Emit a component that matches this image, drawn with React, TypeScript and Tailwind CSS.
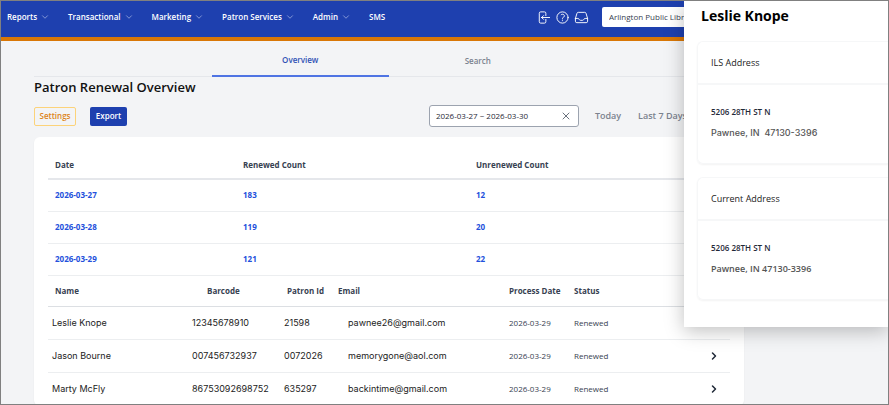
import React from "react"
import {
  HiOutlineArrowLeftOnRectangle,
  HiOutlineQuestionMarkCircle,
  HiOutlineInbox,
  HiOutlineChevronDown,
  HiOutlineXMark,
} from "react-icons/hi2"
import { ChevronRight } from "lucide-react"

const menu = [
  { label: "Reports", dropdown: true },
  { label: "Transactional", dropdown: true },
  { label: "Marketing", dropdown: true },
  { label: "Patron Services", dropdown: true },
  { label: "Admin", dropdown: true },
  { label: "SMS", dropdown: false },
]

const days = [
  { date: "2026-03-27", renewed: 183, unrenewed: 12 },
  { date: "2026-03-28", renewed: 119, unrenewed: 20 },
  { date: "2026-03-29", renewed: 121, unrenewed: 22 },
]

const patrons = [
  { name: "Leslie Knope", barcode: "12345678910", id: "21598", email: "pawnee26@gmail.com" },
  { name: "Jason Bourne", barcode: "007456732937", id: "0072026", email: "memorygone@aol.com" },
  { name: "Marty McFly", barcode: "86753092698752", id: "635297", email: "backintime@gmail.com" },
]

const NavBar: React.FC = () => {
  return (
    <header className="flex h-10 items-center border-b-4 border-[#d97706] bg-[#1e40af] pb-1 pl-[6px] text-white">
      <nav className="flex items-center gap-[19px]">
        {menu.map((item) => (
          <button key={item.label} type="button" className="flex items-center gap-1 text-[8px] leading-3 font-semibold">
            {item.label}
            {item.dropdown && <HiOutlineChevronDown className="size-2 text-[#b4c0e8]" strokeWidth={2} />}
          </button>
        ))}
      </nav>

      {/* Account shortcuts */}
      <div className="ml-auto flex items-center gap-1 pr-[13px]">
        <button type="button" aria-label="Sign out">
          <HiOutlineArrowLeftOnRectangle className="size-[15px]" />
        </button>
        <button type="button" aria-label="Help">
          <HiOutlineQuestionMarkCircle className="size-[15px]" />
        </button>
        <button type="button" aria-label="Inbox">
          <HiOutlineInbox className="size-[15px]" />
        </button>
      </div>
      <select
        aria-label="Library"
        className="mr-[166px] h-5 w-[120px] appearance-none rounded-xs bg-white px-[7px] text-[8px] leading-3 text-[#374151]"
      >
        <option>Arlington Public Library</option>
      </select>
    </header>
  )
}

const Tabs: React.FC = () => {
  return (
    <div className="grid h-9 grid-cols-4 border-b border-[#e5e7eb] text-[8px] leading-3 font-semibold">
      <a href="#overview" className="col-start-2 -mb-px flex items-center justify-center border-b-2 border-[#4f74e3] pt-1 text-[#2f51b5]">
        Overview
      </a>
      <a href="#search" className="flex items-center justify-center pt-1 text-[#7b828e]">
        Search
      </a>
    </div>
  )
}

const Toolbar: React.FC = () => {
  return (
    <div className="mt-2 flex items-center gap-[14px] text-[9px] leading-3 font-semibold">
      <button type="button" className="h-[19px] w-[42px] rounded-xs border border-[#fcd37a] text-[8px] text-[#dd8420]">
        Settings
      </button>
      <button type="button" className="h-[19px] w-[37px] rounded-xs bg-[#1e40af] text-[8px] text-white">
        Export
      </button>
      <div className="ml-auto flex h-[22px] w-[150px] items-center rounded-[3px] border border-[#9ca3af] bg-white px-[6px]">
        <input
          type="text"
          aria-label="Date range"
          defaultValue="2026-03-27 ~ 2026-03-30"
          className="min-w-0 flex-1 text-[8px] font-normal text-[#1f2937] outline-none"
        />
        <button type="button" aria-label="Clear dates">
          <HiOutlineXMark className="size-3 text-[#374151]" />
        </button>
      </div>
      <button type="button" className="ml-[2px] text-[#7b828e]">Today</button>
      <button type="button" className="mr-[57px] ml-[3px] text-[#7b828e]">Last 7 Days</button>
    </div>
  )
}

const CountTable: React.FC = () => {
  return (
    <table className="w-full table-fixed text-left text-[8px] leading-3">
      <thead>
        <tr className="h-7 border-b-2 border-[#e5e7eb] font-semibold text-[#374151]">
          <th className="w-[188px] px-[7px]">Date</th>
          <th className="w-[233px] px-[7px]">Renewed Count</th>
          <th className="px-[7px]">Unrenewed Count</th>
        </tr>
      </thead>
      <tbody>
        {days.map((day) => (
          <tr key={day.date} className="h-8 border-b border-[#eceef0] font-bold text-[#2350dc]">
            <td className="px-[7px]">
              <a href="#day">{day.date}</a>
            </td>
            <td className="px-[7px]">
              <a href="#renewed">{day.renewed}</a>
            </td>
            <td className="px-[7px]">
              <a href="#unrenewed">{day.unrenewed}</a>
            </td>
          </tr>
        ))}
      </tbody>
    </table>
  )
}

const PatronTable: React.FC = () => {
  return (
    <table className="w-full table-fixed text-left text-[8px] leading-3">
      <thead>
        <tr className="h-[31px] border-b border-[#dcdfe3] font-semibold text-[#374151]">
          <th className="w-[140px] pl-[7px]">Name</th>
          <th className="w-[92px] pl-[19px]">Barcode</th>
          <th className="w-[54px] pl-[7px]">Patron Id</th>
          <th className="w-[171px] pl-1">Email</th>
          <th className="w-[65px] pl-1">Process Date</th>
          <th className="pl-1">Status</th>
          <td className="w-[22px]" />
        </tr>
      </thead>
      <tbody>
        {patrons.map((patron) => (
          <tr key={patron.id} className="h-[33px] border-b border-[#eceef0] text-[#374151]">
            <td className="pl-1 font-[Inter,sans-serif] text-[9px] text-[#222222]">{patron.name}</td>
            <td className="pl-1 font-[Inter,sans-serif] text-[9px] text-[#222222]">{patron.barcode}</td>
            <td className="pl-1 font-[Inter,sans-serif] text-[9px] text-[#222222]">{patron.id}</td>
            <td className="pl-[14px] font-[Inter,sans-serif] text-[9px] text-[#222222]">{patron.email}</td>
            <td className="pl-1">2026-03-29</td>
            <td className="pl-1">Renewed</td>
            <td>
              <button type="button" aria-label="Open patron" className="flex">
                <ChevronRight className="size-3 text-[#1f2937]" strokeWidth={3} />
              </button>
            </td>
          </tr>
        ))}
      </tbody>
    </table>
  )
}

const AddressCard: React.FC<{ title: string; street: string; children: React.ReactNode }> = ({ title, street, children }) => {
  return (
    <section className="h-[123px] rounded-l-md border border-r-0 border-[#f6f7f8] shadow-xs">
      <h3 className="flex h-[43px] items-center border-b-2 border-[#f6f7f8] px-[13px] text-[9px] leading-3 text-[#222222]">{title}</h3>
      <div className="px-[13px] pt-[21px]">
        <p className="text-[8px] leading-3 font-semibold text-[#1f2937]">{street}</p>
        {children}
      </div>
    </section>
  )
}

const PatronDrawer: React.FC = () => {
  return (
    <aside className="absolute top-0 right-0 h-[326px] w-[204px] bg-white pl-[13px] shadow-[0_4px_18px_rgba(0,0,0,0.25)]">
      <h2 className="h-10 px-1 pt-[5px] text-[14px] leading-5 font-bold text-black">Leslie Knope</h2>
      <div className="flex flex-col gap-[13px]">
        <AddressCard title="ILS Address" street="5206 28TH ST N">
          <p className="mt-[9px] font-[Inter,sans-serif] text-[9px] leading-3 font-medium whitespace-pre text-[#555555]">
            {"Pawnee, IN  47130-3396"}
          </p>
        </AddressCard>
        <AddressCard title="Current Address" street="5206 28TH ST N">
          <p className="mt-[9px] text-[9px] leading-3 font-semibold text-[#555555]">Pawnee, IN 47130-3396</p>
        </AddressCard>
      </div>
    </aside>
  )
}

const App: React.FC = () => {
  return (
    <div className="relative h-screen overflow-hidden border border-[#808080] bg-[#f3f4f6] font-['Open_Sans',sans-serif]">
      <NavBar />
      <main className="pr-36 pl-[33px]">
        <Tabs />
        <h1 className="text-[13px] leading-5 font-semibold text-[#111111]">Patron Renewal Overview</h1>
        <Toolbar />
        <div className="mt-[10px] rounded-md bg-white px-[14px] pt-[14px] shadow-xs">
          <CountTable />
          <PatronTable />
        </div>
      </main>
      <PatronDrawer />
    </div>
  )
}

export default App
